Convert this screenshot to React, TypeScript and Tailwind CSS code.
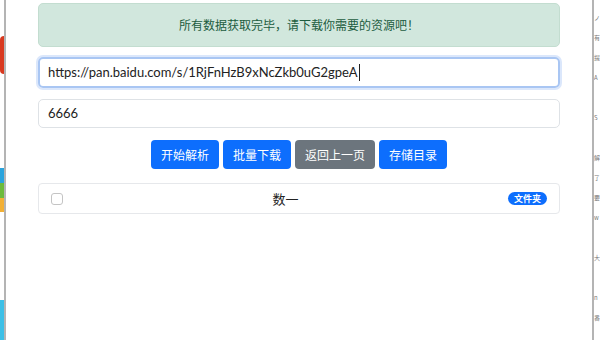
import React from 'react';

const cjk = { fontFamily: '"Noto Sans CJK SC", "Noto Sans", sans-serif' };

const buttons = [
  { label: '开始解析', color: 'bg-[#0d6efd]' },
  { label: '批量下载', color: 'bg-[#0d6efd]' },
  { label: '返回上一页', color: 'bg-[#6c757d]' },
  { label: '存储目录', color: 'bg-[#0d6efd]' },
];

const sideText = ['ノ', '有', '提', 'A', '', 'S', '', '解', '了', '要', 'w', '', '大', '', 'n', '番'];

const App = () => {
  return (
    <div className="w-[600px] h-[340px] flex overflow-hidden bg-white" style={cjk}>
      {/* left desktop strip */}
      <div className="w-[4px] shrink-0 flex flex-col">
        <div className="h-[36px]" />
        <div className="h-[38px] bg-[#d9391f] rounded-l-full" />
        <div className="h-[94px]" />
        <div className="h-[15px] bg-[#2aa4dd]" />
        <div className="h-[15px] bg-[#6cbb3c]" />
        <div className="h-[14px] bg-[#f2b035]" />
        <div className="h-[88px]" />
        <div className="flex-1 bg-[#3cbfe6]" />
      </div>
      <div className="w-[2px] shrink-0 bg-[#b4b4b4]" />

      {/* window */}
      <main className="w-[586px] shrink-0 px-[32px] pt-[3px]">
        <div className="h-[44px] rounded-[5px] bg-[#d1e7dd] border border-[#c3ddd0] flex items-center justify-center text-[12px] text-[#1c5c3f]">
          所有数据获取完毕，请下载你需要的资源吧！
        </div>

        <div className="mt-[10px] h-[31px] rounded-[5px] border-2 border-[#a9c6f3] shadow-[0_0_0_2px_#dbe7fb] flex items-center px-[8px] text-[13px] text-[#222]" style={{ fontFamily: 'Lato, sans-serif' }}>
          https://pan.baidu.com/s/1RjFnHzB9xNcZkb0uG2gpeA
          <span className="w-px h-[17px] bg-[#222] ml-px" />
        </div>

        <div className="mt-[11px] h-[29px] rounded-[5px] border border-[#dee2e6] flex items-center px-[9px] text-[13px] text-[#222]" style={{ fontFamily: 'Lato, sans-serif' }}>
          6666
        </div>

        <div className="mt-[12px] flex justify-center gap-[4px]">
          {buttons.map((b) => (
            <button
              key={b.label}
              className={`${b.color} h-[29px] px-[10px] rounded-[4px] text-white text-[12px] leading-none`}
            >
              {b.label}
            </button>
          ))}
        </div>

        <div className="mt-[14px] h-[31px] rounded-[4px] border border-[#e6e8eb] flex items-center pl-[12px] pr-[12px]">
          <span className="w-[12px] h-[12px] rounded-[3px] border border-[#c4c4c4] bg-white shrink-0" />
          <span className="flex-1 text-center text-[13px] text-[#222]">数一</span>
          <span className="h-[13px] w-[39px] rounded-full bg-[#0d6efd] text-white text-[9px] font-bold flex items-center justify-center">
            文件夹
          </span>
        </div>
      </main>

      {/* right desktop strip */}
      <div className="w-[2px] shrink-0 bg-[#b4b4b4]" />
      <div className="flex-1 overflow-hidden flex flex-col pt-[8px] text-[6px] leading-[20px] text-[#777] whitespace-nowrap">
        {sideText.map((t, i) => (
          <span key={i}>{t || '\u00a0'}</span>
        ))}
      </div>
    </div>
  );
};

export default App;
